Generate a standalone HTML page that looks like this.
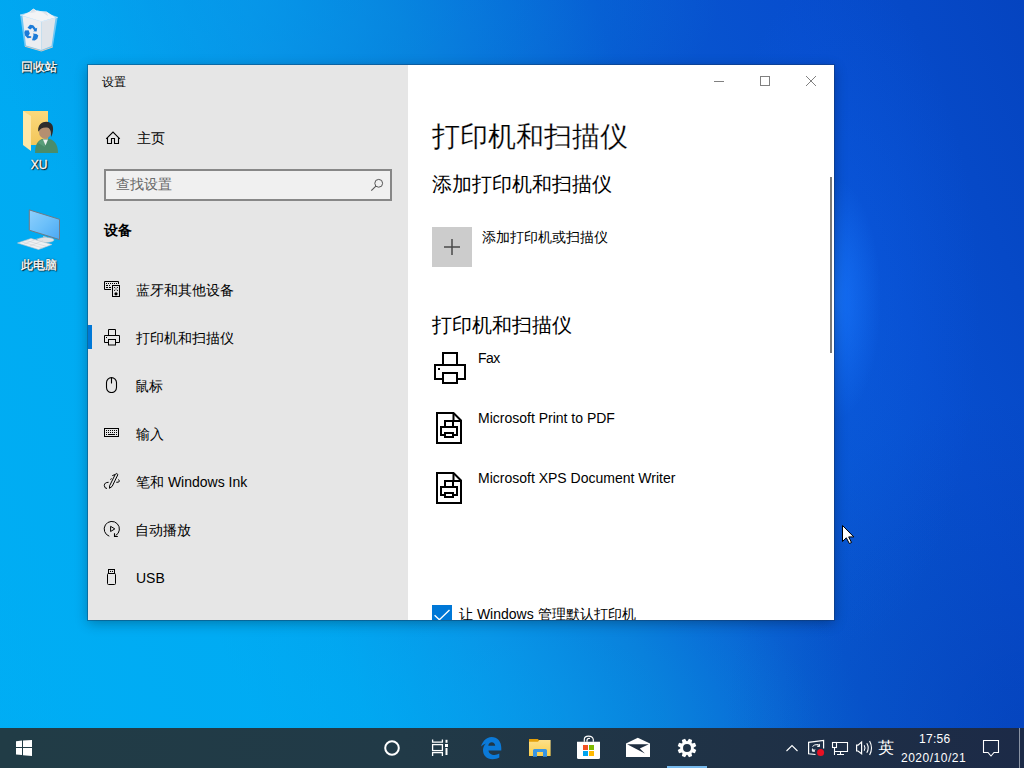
<!DOCTYPE html>
<html><head><meta charset="utf-8">
<style>
*{margin:0;padding:0;box-sizing:border-box}
html,body{width:1024px;height:768px;overflow:hidden}
body{position:relative;font-family:"Liberation Sans",sans-serif;
background:
 radial-gradient(ellipse 45px 120px at 836px 300px, rgba(25,120,255,0.7), rgba(25,120,255,0) 100%),
 radial-gradient(ellipse 140px 340px at 840px 310px, rgba(15,100,240,0.35), rgba(15,100,240,0) 100%),
 radial-gradient(ellipse 460px 190px at 260px 0px, rgba(0,160,240,0.45), rgba(0,160,240,0) 100%),
 radial-gradient(ellipse 560px 220px at 260px 720px, rgba(0,172,245,0.55), rgba(0,172,245,0) 100%),
 radial-gradient(ellipse 300px 330px at 1024px 728px, rgba(0,40,150,0.28), rgba(0,40,150,0) 100%),
 linear-gradient(69deg,#00aef4 0px,#00abf2 250px,#02a4ee 360px,#0a90e4 500px,#0a7ad8 640px,#0a6ed6 700px,#0858d0 830px,#074ece 1010px,#0544c0 1231px);
}
.abs{position:absolute}
.dlabel{position:absolute;color:#fff;font-size:12px;text-align:center;width:76px;-webkit-text-stroke:0.35px #fff;
 text-shadow:0 0 1px #000,1px 1px 1px #000,0 0 2px rgba(0,0,0,.7)}
#win{position:absolute;left:88px;top:65px;width:746px;height:555px;background:#fff;
 box-shadow:0 0 0 1px rgba(20,50,90,.38),0 3px 12px rgba(0,0,0,.3);overflow:hidden}
#nav{position:absolute;left:0;top:0;width:320px;height:555px;background:#e6e6e6}
.t{position:absolute;white-space:nowrap;color:#000;line-height:1}
.navtxt{font-size:14px}
.ic{position:absolute}
#taskbar{position:absolute;left:0;top:728px;width:1024px;height:40px;
 background:linear-gradient(90deg,#213c46 0px,#213a47 400px,#1f3146 750px,#1c2a47 1024px)}
</style></head>
<body>

<!-- desktop icons -->
<svg class="abs" style="left:0;top:0" width="80" height="280" viewBox="0 0 80 280">
 <defs>
  <linearGradient id="scr" x1="0" y1="0" x2="1" y2="1"><stop offset="0" stop-color="#8fd0fd"/><stop offset=".5" stop-color="#6cc0fa"/><stop offset="1" stop-color="#4aa8f4"/></linearGradient>
  <linearGradient id="fold" x1="0" y1="0" x2="0" y2="1"><stop offset="0" stop-color="#fcd97c"/><stop offset="1" stop-color="#f2c65a"/></linearGradient>
 </defs>
 <!-- recycle bin -->
 <path d="M20.2 15 L37.5 10.6 L57.6 17.4 L52.8 47 L41.4 51 L24.5 46.3 Z" fill="rgba(200,225,248,.55)"/>
 <path d="M22.5 16 L41.4 21.6 L41.4 50 L26 45.5 Z" fill="#eceef1"/>
 <path d="M41.4 21.6 L55.5 18 L51.5 46 L41.4 50 Z" fill="#dfe4ea"/>
 <path d="M22 15.5 L29 12 L33.5 8.5 L37 11 L46.5 11.5 L55.5 17.5 L41.4 21.6 Z" fill="#f3f4f6"/>
 <path d="M29 13 L33.6 9 L36 12 Z M42 12 L46.6 11.9 L48 16 Z" fill="#d8dce2"/>
 <path d="M20.2 15 L37.5 10.6 L57.6 17.4 L41.4 21.6 Z" fill="none" stroke="rgba(230,240,250,.8)" stroke-width=".8"/>
 <path d="M25 46.3 L41.4 51 L52.8 47" fill="none" stroke="#d9c9bd" stroke-width="1"/>
 <g fill="#1b7bd8">
  <path d="M27.5 27.8 L30 24.8 L33.2 25.2 L35.8 28.6 L37.2 27.8 L36.6 31.5 L33 31.3 L34.3 30.4 L32.3 27.8 L30.3 29.5 Z"/>
  <path d="M25 30.5 L28.6 30.2 L29.8 33.6 L28.4 36 L31.2 36.2 L31.2 37.8 L27.6 38.3 L25 35.5 L24.4 32.6 Z"/>
  <path d="M32.5 38.8 L33.6 34.8 L32.8 33.5 L36.5 34 L38.3 35.6 L37.3 38.8 L34.8 40.6 L32 40.3 Z"/>
 </g>
 <!-- folder user -->
 <rect x="23" y="111" width="25" height="34" fill="url(#fold)"/>
 <path d="M23 111 L31 116 L31 151 L23 145 Z" fill="#fde7a8"/>
 <path d="M35 153 C35 143 39 138.5 46 138.5 C53 138.5 58 143 58 153 Z" fill="#4a8c6a"/>
 <path d="M38 143 Q41 139 44 139 L45 147 Z" fill="#5a9e7a"/>
 <path d="M43 139.5 L45.5 145.5 L48 139.5 Z" fill="#eef2f0"/>
 <ellipse cx="45" cy="132" rx="6" ry="6.8" fill="#b48f70"/>
 <path d="M38.2 131 C37.5 122.5 46 120 50.5 123 C53.5 125 53.8 130 52 135 L51 137 C51.5 131 50 128 47 127.5 C43 127 40 128.5 38.8 131.5 Z" fill="#2c2c2c"/>
 <!-- computer -->
 <path d="M29.3 209.9 L59.5 219.3 L59.5 239.6 L29.3 230.2 Z" fill="url(#scr)" stroke="#6f7a85" stroke-width="1"/>
 <path d="M43 236 L47 237 L46 240 L44 240 Z" fill="#c9ced4"/>
 <ellipse cx="45.5" cy="240" rx="8.5" ry="2.6" fill="#dfe3e7" stroke="#b8bec5" stroke-width=".5"/>
 <path d="M17.5 243 L31 238.5 L52 244.5 L38.5 249.5 Z" fill="#eef0f2" stroke="#c0c6cc" stroke-width=".6"/>
 <path d="M22 242 L43 248 M26 240.5 L47 246.5 M24 244 L38 238.5 M30 246 L43 240.5" stroke="#c8cdd3" stroke-width=".5"/>
</svg>
<div class="dlabel" style="left:1px;top:59px">回收站</div>
<div class="dlabel" style="left:1px;top:158px">XU</div>
<div class="dlabel" style="left:1px;top:257px">此电脑</div>

<!-- settings window -->
<div id="win">
 <div id="nav">
  <div class="t" style="left:14px;top:11px;font-size:12px">设置</div>
  <!-- home icon -->
  <svg class="ic" style="left:17px;top:65px" width="16" height="16" viewBox="0 0 16 16">
   <path d="M1.2 8.8 L8 2 L14.8 8.8 M2.5 7.6 V13.5 H6.5 V8.5 H9.5 V13.5 H13.5 V7.6" fill="none" stroke="#000" stroke-width="1.1"/>
  </svg>
  <div class="t navtxt" style="left:49px;top:66px">主页</div>
  <!-- search -->
  <div class="abs" style="left:16px;top:104px;width:288px;height:32px;border:2px solid #878787;background:#f0f0f0"></div>
  <div class="t" style="left:28px;top:112px;font-size:14px;color:#666">查找设置</div>
  <svg class="ic" style="left:282px;top:113px" width="14" height="14" viewBox="0 0 14 14">
   <circle cx="8.7" cy="5.3" r="3.9" fill="none" stroke="#555" stroke-width="1"/>
   <path d="M5.9 8.1 L1.3 12.7" stroke="#555" stroke-width="1.1"/>
  </svg>
  <div class="t" style="left:16px;top:158px;font-size:14px;font-weight:bold">设备</div>

  <!-- nav items -->
  <svg class="ic" style="left:16px;top:216px" width="17" height="17" viewBox="0 0 17 17">
   <path d="M14.5 3 V0.5 H0.5 V8.5 H7" fill="none" stroke="#000" stroke-width="1"/>
   <path d="M2 2.5 h1 M4 2.5 h1 M6 2.5 h1 M8 2.5 h1 M10 2.5 h1 M12 2.5 h1 M2 4.5 h2 M5 4.5 h1 M2 6.5 h2 M5 6.5 h2" stroke="#000" stroke-width="1"/>
   <rect x="8.5" y="4.5" width="7" height="11" fill="none" stroke="#000" stroke-width="1"/>
   <circle cx="10.6" cy="6.5" r=".6" fill="#000"/><circle cx="13.4" cy="6.5" r=".6" fill="#000"/>
   <circle cx="10.6" cy="9.3" r=".6" fill="#000"/><circle cx="13.4" cy="9.3" r=".6" fill="#000"/>
   <circle cx="12" cy="7.9" r="1" fill="#999"/>
   <circle cx="12" cy="12.8" r="1.6" fill="#000"/>
  </svg>
  <div class="t navtxt" style="left:48px;top:218px">蓝牙和其他设备</div>

  <div class="abs" style="left:0;top:260px;width:4px;height:24px;background:#0078d7"></div>
  <svg class="ic" style="left:16px;top:264px" width="17" height="17" viewBox="0 0 17 17">
   <path d="M4.5 6 V0.5 H11.5 V6" fill="none" stroke="#000" stroke-width="1"/>
   <path d="M4 13.5 H0.5 V6.5 H15.5 V13.5 H12" fill="none" stroke="#000" stroke-width="1"/>
   <rect x="4.5" y="10.5" width="7" height="5.5" fill="none" stroke="#000" stroke-width="1"/>
   <rect x="2" y="8" width="1" height="1" fill="#000"/>
  </svg>
  <div class="t navtxt" style="left:48px;top:266px">打印机和扫描仪</div>

  <svg class="ic" style="left:17px;top:311px" width="13" height="17" viewBox="0 0 13 17">
   <rect x="1.5" y="1.6" width="10" height="15" rx="5" fill="none" stroke="#000" stroke-width="1.1"/>
   <path d="M6.5 1.6 V7.5" stroke="#000" stroke-width="1.1"/>
  </svg>
  <div class="t navtxt" style="left:47px;top:314px">鼠标</div>

  <svg class="ic" style="left:16px;top:363px" width="16" height="10" viewBox="0 0 16 10">
   <rect x="0.5" y="0.5" width="14" height="8" fill="none" stroke="#000" stroke-width="1"/>
   <path d="M2 2.5 h1 M4 2.5 h1 M6 2.5 h1 M8 2.5 h1 M10 2.5 h1 M12 2.5 h1 M2 4.5 h1 M4 4.5 h1 M6 4.5 h1 M8 4.5 h1 M10 4.5 h1 M12 4.5 h1 M2 6.5 h1 M4 6.5 h7 M12 6.5 h1" stroke="#000" stroke-width="1"/>
  </svg>
  <div class="t navtxt" style="left:48px;top:362px">输入</div>

  <svg class="ic" style="left:14px;top:406px" width="20" height="20" viewBox="0 0 20 20">
   <path d="M7.5 17.3 L7.6 14.8 L13.3 3.3 Q15 1.6 15.9 3.6 L10.2 15.3 Z" fill="none" stroke="#000" stroke-width="1"/>
   <path d="M10.3 4.6 L13 3.6 M8.3 8.5 L9.7 7.6" stroke="#000" stroke-width="1"/>
   <path d="M6.6 11.3 Q2.4 11.3 2.3 14.5 Q2.5 17.5 5 17.5" fill="none" stroke="#000" stroke-width="1"/>
   <path d="M16.2 8.6 Q17.9 9.4 17.2 10.6 Q16.6 11.3 14.3 11.3" fill="none" stroke="#000" stroke-width="1"/>
  </svg>
  <div class="t navtxt" style="left:48px;top:410px">笔和 Windows Ink</div>

  <svg class="ic" style="left:14px;top:454px" width="20" height="20" viewBox="0 0 20 20">
   <path d="M7.3 17.2 A7.6 7.6 0 1 1 13.6 16.6" fill="none" stroke="#000" stroke-width="1"/>
   <path d="M12.5 14.2 V17.5 H15.8" fill="none" stroke="#000" stroke-width="1.1"/>
   <path d="M8.6 7.3 V12.5 L12.8 9.9 Z" fill="none" stroke="#000" stroke-width="1"/>
  </svg>
  <div class="t navtxt" style="left:47px;top:458px">自动播放</div>

  <svg class="ic" style="left:14px;top:502px" width="20" height="20" viewBox="0 0 20 20">
   <rect x="6.5" y="2.5" width="6" height="4" fill="none" stroke="#000" stroke-width="1"/>
   <circle cx="8.5" cy="4.4" r=".6" fill="#000"/><circle cx="10.5" cy="4.4" r=".6" fill="#000"/>
   <rect x="5.5" y="6.5" width="8" height="11" rx="1" fill="none" stroke="#000" stroke-width="1"/>
  </svg>
  <div class="t navtxt" style="left:48px;top:506px">USB</div>
 </div>

 <!-- window controls -->
 <svg class="ic" style="left:620px;top:8px" width="120" height="16" viewBox="0 0 120 16">
  <path d="M6 8.5 H16" stroke="#808080" stroke-width="1"/>
  <rect x="52.5" y="3.5" width="9" height="9" fill="none" stroke="#808080" stroke-width="1"/>
  <path d="M98 3 L108 13 M108 3 L98 13" stroke="#808080" stroke-width="1"/>
 </svg>

 <!-- content -->
 <div class="t" style="left:344px;top:58px;font-size:28px;-webkit-text-stroke:0.2px #fff">打印机和扫描仪</div>
 <div class="t" style="left:344px;top:109px;font-size:20px">添加打印机和扫描仪</div>
 <div class="abs" style="left:344px;top:162px;width:40px;height:40px;background:#cccccc"></div>
 <svg class="ic" style="left:344px;top:162px" width="40" height="40" viewBox="0 0 40 40">
  <path d="M12 20 H28 M20 12 V28" stroke="#4a4a4a" stroke-width="1.5"/>
 </svg>
 <div class="t" style="left:394px;top:165px;font-size:14px">添加打印机或扫描仪</div>

 <div class="t" style="left:344px;top:250px;font-size:20px">打印机和扫描仪</div>

 <svg class="ic" style="left:344px;top:285px" width="36" height="36" viewBox="0 0 36 36">
  <path d="M11 15 V3 H25 V15" fill="none" stroke="#000" stroke-width="2"/>
  <path d="M10 29 H3 V15 H33 V29 H26" fill="none" stroke="#000" stroke-width="2"/>
  <rect x="11" y="23" width="14" height="10" fill="none" stroke="#000" stroke-width="2"/>
  <rect x="6" y="18" width="2" height="2" fill="#000"/>
 </svg>
 <div class="t" style="left:390px;top:286px;font-size:14px;letter-spacing:-0.6px">Fax</div>

 <svg class="ic" style="left:344px;top:345px" width="36" height="36" viewBox="0 0 36 36">
  <path d="M5 3 H21.5 L29 10.5 V33 H5 Z" fill="none" stroke="#000" stroke-width="2"/>
  <path d="M21.5 3 V11 H29" fill="none" stroke="#000" stroke-width="2"/>
  <path d="M13 17 V11 H21 V17" fill="none" stroke="#000" stroke-width="2"/>
  <path d="M13 25 H9 V17 H25 V25 H21" fill="none" stroke="#000" stroke-width="2"/>
  <rect x="13" y="23" width="8" height="4" fill="none" stroke="#000" stroke-width="2"/>
 </svg>
 <div class="t" style="left:390px;top:346px;font-size:14px">Microsoft Print to PDF</div>

 <svg class="ic" style="left:344px;top:405px" width="36" height="36" viewBox="0 0 36 36">
  <path d="M5 3 H21.5 L29 10.5 V33 H5 Z" fill="none" stroke="#000" stroke-width="2"/>
  <path d="M21.5 3 V11 H29" fill="none" stroke="#000" stroke-width="2"/>
  <path d="M13 17 V11 H21 V17" fill="none" stroke="#000" stroke-width="2"/>
  <path d="M13 25 H9 V17 H25 V25 H21" fill="none" stroke="#000" stroke-width="2"/>
  <rect x="13" y="23" width="8" height="4" fill="none" stroke="#000" stroke-width="2"/>
 </svg>
 <div class="t" style="left:390px;top:406px;font-size:14px">Microsoft XPS Document Writer</div>

 <div class="abs" style="left:344px;top:540px;width:20px;height:20px;background:#0078d7"></div>
 <svg class="ic" style="left:344px;top:540px" width="20" height="20" viewBox="0 0 20 20">
  <path d="M2.6 10.2 L7.4 14.7 L17.5 5" fill="none" stroke="#fff" stroke-width="1.4"/>
 </svg>
 <div class="t" style="left:371px;top:542px;font-size:14px">让 Windows 管理默认打印机</div>

 <div class="abs" style="left:742px;top:112px;width:2px;height:176px;background:#7a7a7a"></div>
</div>

<!-- cursor -->
<svg class="abs" style="left:842px;top:525px" width="14" height="20" viewBox="0 0 14 20">
 <path d="M0.5 0.5 L0.5 16.5 L4.3 12.8 L7.3 18.5 L9.5 17.5 L6.7 11.9 L11.8 11.9 Z" fill="#fff" stroke="#000" stroke-width="1"/>
</svg>

<!-- taskbar -->
<div id="taskbar">
 <svg class="abs" style="left:0;top:0" width="1024" height="40" viewBox="0 0 1024 40">
  <!-- start -->
  <path d="M16 13.2 L22 12.6 V19.1 H16 Z M23 12.5 L32 11.9 V19.1 H23 Z M16 20.1 H22 V27.1 L16 26.6 Z M23 20.1 H32 V28.1 L23 27.3 Z" fill="#fff"/>
  <!-- cortana -->
  <circle cx="392" cy="20" r="6.8" fill="none" stroke="#fff" stroke-width="2"/>
  <!-- task view -->
  <path d="M432.6 11.5 V14.2 H442.4 V11.5 M432.6 28 V24.6 H442.4 V28" fill="none" stroke="#fff" stroke-width="1.3"/>
  <rect x="432.6" y="16.6" width="9.8" height="6" fill="none" stroke="#fff" stroke-width="1.3"/>
  <rect x="445.5" y="11.8" width="2" height="3" fill="#fff"/>
  <rect x="445" y="16" width="3" height="3" fill="#fff"/>
  <rect x="445.5" y="20" width="2" height="7" fill="#fff"/>
  <!-- edge -->
  <path fill-rule="evenodd" d="M481 18.5 C483 12.5 487 9 491.5 9 C497.5 9 501.3 13.5 501.3 20 V22.5 H488.5 C488.8 25.3 491.3 27 494.5 27 C496.3 27 497.8 26.5 499.3 25.6 V29.6 C497.5 30.6 495.2 31.2 492.5 31.2 C486.5 31.2 483 27.2 483 22 C483 19.5 484 17 486 15.5 C484 16.3 482.3 17.3 481 18.5 Z M488.3 17.8 H495.2 C495 15.5 493.6 14.3 491.8 14.3 C489.8 14.3 488.6 15.8 488.3 17.8 Z" fill="#0b7ad8"/>
  <!-- explorer -->
  <defs><linearGradient id="fy" x1="0" y1="0" x2="0" y2="1"><stop offset="0" stop-color="#fde08a"/><stop offset="1" stop-color="#fccf4c"/></linearGradient></defs>
  <rect x="529" y="12" width="21.6" height="16" fill="url(#fy)"/>
  <path d="M529 11 H537.8 L539.3 12.4 L537.8 13.8 H529 Z" fill="#e5a00a"/>
  <path d="M533 28.8 V22.5 Q533 21 534.5 21 H545.5 Q547 21 547 22.5 V28.8 H543 V24.1 H537 V28.8 Z" fill="#3a96e2"/>
  <!-- store -->
  <path d="M577 13.8 H600 V29.5 Q600 31 598.5 31 H578.5 Q577 31 577 29.5 Z" fill="#fff"/>
  <path d="M584.3 13.8 V11.5 Q584.3 8.2 588.5 8.2 Q592.7 8.2 593.3 11.5 V13.8 M587 13.8 V12 Q587.5 10 590 10.5" fill="none" stroke="#fff" stroke-width="1.2"/>
  <rect x="583" y="17" width="5" height="5" fill="#f25022"/>
  <rect x="589" y="17" width="5" height="5" fill="#7fba00"/>
  <rect x="583" y="23" width="5" height="5" fill="#00a4ef"/>
  <rect x="589" y="23" width="5" height="5" fill="#ffb900"/>
  <!-- mail -->
  <path d="M626 15.4 L637.8 9.7 L650 15.4 V29 H626 Z" fill="#fff"/>
  <path d="M627.1 16.3 H648.8 L639.8 20.6 L644.9 25.5 Z" fill="#1f2e40"/>
  <!-- settings gear -->
  <g transform="translate(687 20)"><path d="M-1.7 -9.3 H1.7 L2.4 -5.5 H-2.4 Z" fill="#fff" transform="rotate(22.5)"/><path d="M-1.7 -9.3 H1.7 L2.4 -5.5 H-2.4 Z" fill="#fff" transform="rotate(67.5)"/><path d="M-1.7 -9.3 H1.7 L2.4 -5.5 H-2.4 Z" fill="#fff" transform="rotate(112.5)"/><path d="M-1.7 -9.3 H1.7 L2.4 -5.5 H-2.4 Z" fill="#fff" transform="rotate(157.5)"/><path d="M-1.7 -9.3 H1.7 L2.4 -5.5 H-2.4 Z" fill="#fff" transform="rotate(202.5)"/><path d="M-1.7 -9.3 H1.7 L2.4 -5.5 H-2.4 Z" fill="#fff" transform="rotate(247.5)"/><path d="M-1.7 -9.3 H1.7 L2.4 -5.5 H-2.4 Z" fill="#fff" transform="rotate(292.5)"/><path d="M-1.7 -9.3 H1.7 L2.4 -5.5 H-2.4 Z" fill="#fff" transform="rotate(337.5)"/><circle r="5.3" fill="none" stroke="#fff" stroke-width="2.7"/></g>
  <rect x="667" y="38" width="40" height="2" fill="#76b9ed"/>
  <!-- tray -->
  <path d="M786.5 23 L792 17.5 L797.5 23" fill="none" stroke="#fff" stroke-width="1.1"/>
  <path d="M815.5 26.5 L808.6 25.8 V14.3 L823.6 12.5 V20.5" fill="none" stroke="#fff" stroke-width="1.2"/>
  <path d="M812.5 18.5 Q814 16.3 818.5 16.5 M819.5 16.3 L819.5 18.6 L817.3 18.3 Z M815 21.3 Q814.5 23 812.8 23 M812.4 20.8 V23.2 H814.8 Z" fill="none" stroke="#fff" stroke-width="1"/>
  <circle cx="820.6" cy="24.4" r="3.5" fill="#e81123"/>
  <path d="M832.5 14.5 H847.5 V23.5 H835 M834.5 19.5 V27 M840.5 23.5 V26.5 M837 26.5 H844" fill="none" stroke="#fff" stroke-width="1.1"/>
  <rect x="832.5" y="14.5" width="4" height="5" fill="none" stroke="#fff" stroke-width="1.1"/>
  <path d="M856.6 17.1 H858 L861.6 14.1 V25.8 L858 23 H856.6 Z" fill="none" stroke="#fff" stroke-width="1.2"/>
  <path d="M864.2 17.2 Q865.8 20 864.2 22.8 M866.8 15.2 Q869.6 20 866.8 24.8 M869.6 13 Q873.4 20 869.6 27" fill="none" stroke="#fff" stroke-width="1.1"/>
  <!-- notification -->
  <path d="M983.5 12.5 H998.5 V24.5 H994 L991 28 L988 24.5 H983.5 Z" fill="none" stroke="#fff" stroke-width="1.1"/>
  <rect x="1019" y="0" width="1" height="40" fill="#8a93a3"/>
 </svg>
 <div class="t" style="left:878px;top:12px;font-size:16px;color:#fff">英</div>
 <div class="t" style="left:919px;top:5px;font-size:12px;color:#fff;letter-spacing:0.3px">17:56</div>
 <div class="t" style="left:901px;top:24px;font-size:12px;color:#fff;letter-spacing:0.5px">2020/10/21</div>
</div>
</body></html>
